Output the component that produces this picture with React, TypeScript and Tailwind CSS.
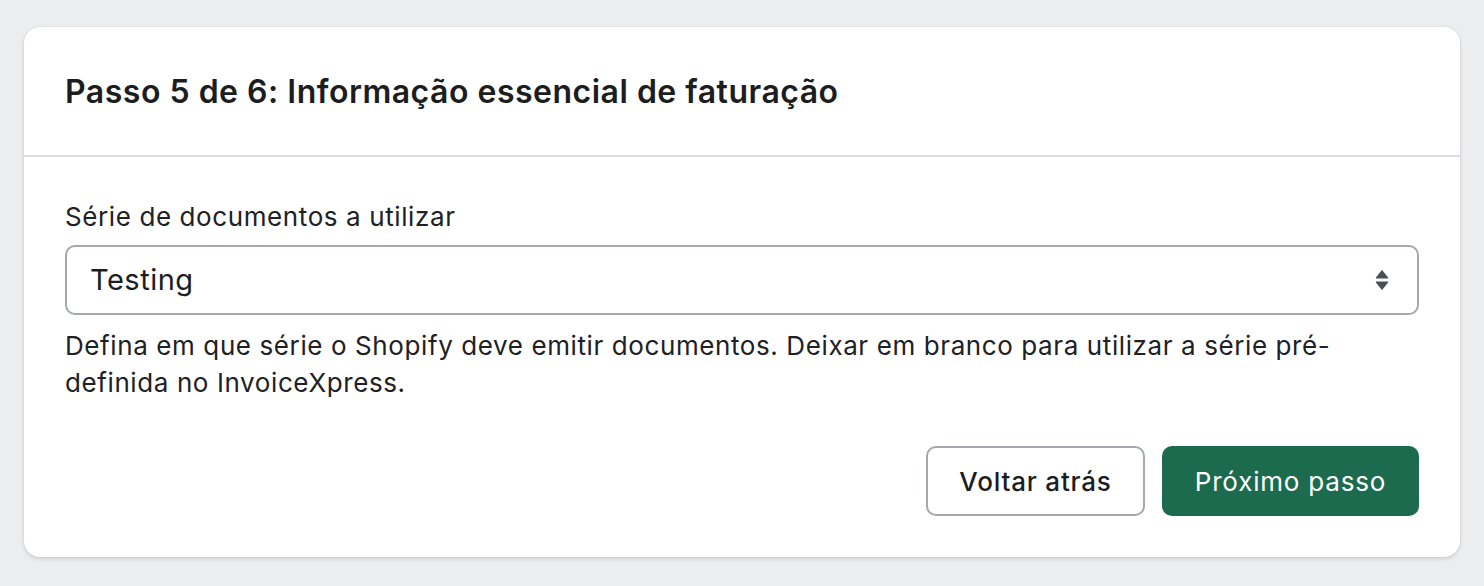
const font = { fontFamily: "Inter, 'Noto Sans', sans-serif" };

const SelectArrows = () => (
  <svg width="14" height="22" viewBox="0 0 14 22" className="text-[#4a4f57]">
    <path d="M7 1.5 L13 9 H1 Z" fill="currentColor" stroke="currentColor" strokeWidth="1" strokeLinejoin="round" />
    <path d="M7 20.5 L13 13 H1 Z" fill="currentColor" stroke="currentColor" strokeWidth="1" strokeLinejoin="round" />
  </svg>
);

export default function App() {
  return (
    <div className="min-h-[586px] w-full bg-[#ecedef] px-[24px] pt-[27px] pb-[30px]" style={font}>
      <div className="rounded-[16px] bg-white shadow-[0_2px_4px_rgba(0,0,0,0.12),0_0_0_1px_rgba(0,0,0,0.03)]">
        {/* Header */}
        <div className="flex h-[130px] items-center px-[41px] pt-[2px] border-b-2 border-[#dedee2]">
          <h2 className="text-[32px] font-semibold text-[#1c1d1f] tracking-[0.5px]">
            Passo 5 de 6: Informação essencial de faturação
          </h2>
        </div>

        {/* Body */}
        <div className="px-[41px] pt-[42px] pb-[41px]">
          <label className="block text-[26px] leading-[36px] tracking-[0.6px] text-[#202124]">
            Série de documentos a utilizar
          </label>
          <div className="mt-[10px] flex h-[70px] items-center rounded-[10px] border-2 border-[#a4a7ae] bg-white pl-[23px] pr-[28px]">
            <span className="flex-1 text-[29px] tracking-[0.5px] text-[#1c1d1f]">Testing</span>
            <SelectArrows />
          </div>
          <p className="mt-[12px] text-[26px] leading-[37px] tracking-[0.6px] text-[#202124]">
            Defina em que série o Shopify deve emitir documentos. Deixar em branco para utilizar a série pré-definida no InvoiceXpress.
          </p>

          <div className="mt-[45px] flex justify-end gap-[17px]">
            <button className="h-[70px] w-[219px] rounded-[10px] border-2 border-[#a4a7ae] bg-white text-[26px] font-medium tracking-[0.8px] text-[#1c1d1f]">
              Voltar atrás
            </button>
            <button className="h-[70px] w-[257px] rounded-[10px] bg-[#1c6b4e] text-[26px] tracking-[0.8px] text-white">
              Próximo passo
            </button>
          </div>
        </div>
      </div>
    </div>
  );
}
